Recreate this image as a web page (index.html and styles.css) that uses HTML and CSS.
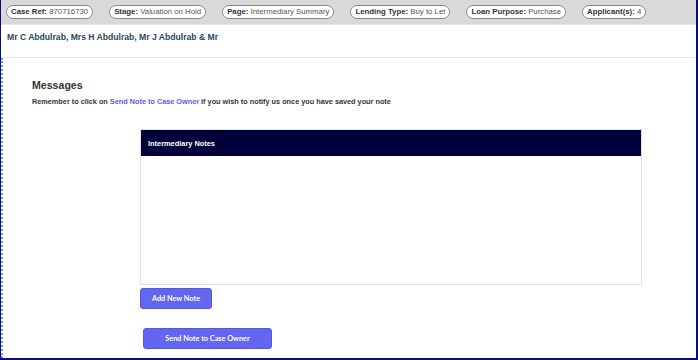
FILE: index.html
```html
<!DOCTYPE html>
<html>
<head>
<meta charset="utf-8">
<link rel="stylesheet" href="styles.css">
</head>
<body>
<div class="frame">
  <div class="topbar">
    <span class="pill"><b>Case Ref:</b> 870716730</span>
    <span class="pill"><b>Stage:</b> Valuation on Hold</span>
    <span class="pill"><b>Page:</b> Intermediary Summary</span>
    <span class="pill"><b>Lending Type:</b> Buy to Let</span>
    <span class="pill"><b>Loan Purpose:</b> Purchase</span>
    <span class="pill"><b>Applicant(s):</b> 4</span>
  </div>
  <div class="names">Mr C Abdulrab, Mrs H Abdulrab, Mr J Abdulrab &amp; Mr</div>
  <div class="main">
    <h2 class="title">Messages</h2>
    <p class="hint">Remember to click on <span class="link">Send Note to Case Owner</span> if you wish to notify us once you have saved your note</p>
    <div class="panel">
      <div class="panel-head">Intermediary Notes</div>
      <div class="panel-body"></div>
    </div>
    <button class="btn btn-add">Add New Note</button>
    <button class="btn btn-send">Send Note to Case Owner</button>
  </div>
</div>
</body>
</html>
```
FILE: styles.css
```css
html, body { margin: 0; padding: 0; background: #fff; }
body { width: 698px; height: 360px; overflow: hidden; font-family: "Liberation Sans", Arial, sans-serif; }
.frame {
  box-sizing: border-box;
  width: 698px; height: 360px;
  border-right: 2px solid #0b0b7a;
  border-bottom: 2px solid #0b0b7a;
  border-left: 1px solid #0b0b7a;
  display: flex; flex-direction: column;
}
.topbar {
  height: 25px;
  background: #d9d9d9;
  border-bottom: 1px solid #e6e6e6;
  display: flex; align-items: center;
  padding-left: 5px;
  gap: 16px;
  box-sizing: border-box;
}
.pill {
  background: #fff;
  border: 1px solid #8a8a8a;
  border-radius: 7px;
  height: 14px;
  line-height: 12px;
  font-size: 7.8px;
  color: #555;
  padding: 0 4px;
  box-sizing: border-box;
  white-space: nowrap;
}
.pill b { color: #333; }
.names {
  height: 33px;
  box-sizing: border-box;
  padding: 7px 0 0 6px;
  font-size: 8.6px; font-weight: bold;
  line-height: 10px;
  color: #1c4a5e;
  border-bottom: 1px solid #e3e3e3;
}
.main {
  flex: 1;
  border-left: 2px dotted #6aa0f0;
  padding-left: 29px;
  display: flex; flex-direction: column; align-items: flex-start;
}
.title {
  margin: 20px 0 0 0;
  font-size: 10.6px; line-height: 14px; font-weight: bold; color: #333;
}
.hint {
  margin: 5px 0 0 0;
  font-size: 7.3px; line-height: 10px; font-weight: bold; color: #333;
}
.link { color: #5b5bf0; }
.panel {
  margin: 22px 0 0 108px;
  width: 502px;
  border: 1px solid #e0e0e0;
  box-sizing: border-box;
}
.panel-head {
  background: #00003a;
  height: 26px;
  color: #fff;
  font-size: 7.4px; font-weight: bold;
  display: flex; align-items: center;
  padding-left: 7px;
}
.panel-body { height: 128px; }
.btn {
  background: #6366f1;
  color: #fff;
  border: 1px solid #5457e0;
  border-radius: 3px;
  font-family: Lato, sans-serif;
  font-weight: 700;
  font-size: 7.3px;
  padding: 0;
  height: 21px;
}
.btn-add { margin: 3px 0 0 108px; width: 72px; }
.btn-send { margin: 19px 0 0 111px; width: 129px; }
```
